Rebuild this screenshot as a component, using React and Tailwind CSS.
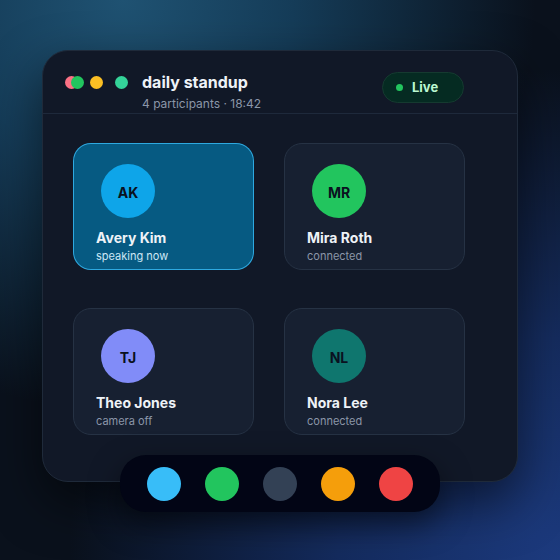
import React from 'react';

const participants = [
  { initials: 'AK', name: 'Avery Kim', status: 'speaking now', avatar: 'bg-[#0ea5e9]', active: true },
  { initials: 'MR', name: 'Mira Roth', status: 'connected', avatar: 'bg-[#22c55e]' },
  { initials: 'TJ', name: 'Theo Jones', status: 'camera off', avatar: 'bg-[#818cf8]' },
  { initials: 'NL', name: 'Nora Lee', status: 'connected', avatar: 'bg-[#0f766e]' },
];

const dockColors = ['bg-[#38bdf8]', 'bg-[#22c55e]', 'bg-[#334155]', 'bg-[#f59e0b]', 'bg-[#ef4444]'];

const ParticipantCard = ({ p }) => (
  <div
    className={
      p.active
        ? 'h-[127px] rounded-[18px] border border-[#38bdf8]/80 bg-[#065a82] px-[22px] pt-[20px]'
        : 'h-[127px] rounded-[18px] border border-[#263244] bg-[#172031] px-[22px] pt-[20px]'
    }
  >
    <div className={`ml-[5px] flex h-[54px] w-[54px] items-center justify-center rounded-full ${p.avatar}`}>
      <span className="pt-[2px] text-[14px] font-bold text-[#0a1120]">{p.initials}</span>
    </div>
    <div className="mt-[11px] text-[14px] leading-[18px] font-bold text-[#eef2f7]">{p.name}</div>
    <div className={p.active ? 'mt-[2px] text-[11px] leading-[14px] text-[#cde7f5]' : 'mt-[2px] text-[11px] leading-[14px] text-[#8b96a8]'}>
      {p.status}
    </div>
  </div>
);

export default function App() {
  return (
    <div
      className="flex h-[560px] w-[560px] flex-col items-center overflow-hidden bg-[#0a111c] pt-[50px] bg-[radial-gradient(circle_at_22%_0%,#1f5272_0%,#153c58_24%,rgba(10,17,28,0)_58%),radial-gradient(circle_at_100%_100%,#1c3a7e_0%,#152c5e_28%,rgba(10,17,28,0)_62%)]"
      style={{ fontFamily: 'Inter, "Noto Sans", sans-serif' }}
    >
      <div className="h-[432px] w-[476px] rounded-[26px] border border-[#1f2a3a] bg-[#111827] shadow-[0_20px_50px_rgba(0,0,0,0.55)]">
        {/* header */}
        <div className="flex items-start justify-between border-b border-[#1e293b] pb-[1px] pl-[22px] pr-[53px] pt-[21px]">
          <div className="flex items-start">
            <div className="flex h-[20px] items-center">
              <span className="h-[13px] w-[13px] rounded-full bg-[#fb7185]" />
              <span className="-ml-[7px] h-[13px] w-[13px] rounded-full bg-[#22c55e]" />
              <span className="ml-[6px] h-[13px] w-[13px] rounded-full bg-[#fbbf24]" />
              <span className="ml-[12px] h-[13px] w-[13px] rounded-full bg-[#34d399]" />
            </div>
            <div className="ml-[14px]">
              <div className="text-[16px] leading-[20px] font-bold text-[#eef2f7]">daily standup</div>
              <div className="mt-[4px] text-[12px] leading-[16px] text-[#8b96a8]">4 participants · 18:42</div>
            </div>
          </div>
          <div className="flex h-[31px] w-[82px] items-center rounded-full border border-[#153a30] bg-[#052b22] pl-[13px]">
            <span className="h-[7px] w-[7px] rounded-full bg-[#22c55e]" />
            <span className="ml-[9px] text-[13px] font-bold text-[#bbf7d0]">Live</span>
          </div>
        </div>

        {/* grid */}
        <div className="grid grid-cols-[181px_181px] gap-x-[30px] gap-y-[38px] pl-[30px] pt-[29px]">
          {participants.map((p) => (
            <ParticipantCard key={p.initials} p={p} />
          ))}
        </div>
      </div>

      {/* dock */}
      <div className="-mt-[27px] flex h-[57px] items-center gap-[24px] rounded-[26px] bg-[#020515] px-[27px] shadow-[0_12px_30px_rgba(0,0,0,0.5)]">
        {dockColors.map((c) => (
          <span key={c} className={`h-[34px] w-[34px] rounded-full ${c}`} />
        ))}
      </div>
    </div>
  );
}
